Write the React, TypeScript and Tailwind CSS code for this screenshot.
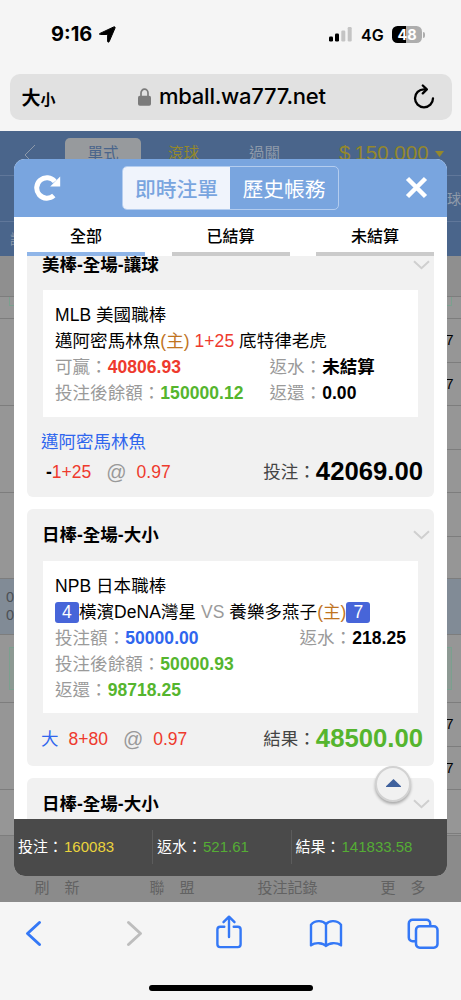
import type { ReactNode } from "react";

const SUMMARY = [
  { label: "投注", value: "160083", color: "text-[#ead43c]", width: "w-[138px] pl-1" },
  { label: "返水", value: "521.61", color: "text-[#55ad35]", width: "w-[139px] pl-1" },
  { label: "結果", value: "141833.58", color: "text-[#55ad35]", width: "w-[156px] pl-[3.500px]" },
];

const LEFT_ROWS = [
  "h-[41px] bg-[#8f8f8f]",
  "h-[22px]",
  "h-[87px]",
  "h-[87px]",
  "h-[86px]",
  "h-[56px] bg-[#818b96]",
  "h-[68px]",
  "h-[87px]",
  "h-[46px]",
];

const RIGHT_ROWS = [
  { cls: "h-[41px] bg-[#8f8f8f]" },
  { cls: "h-[22px]" },
  { cls: "h-[44px]", text: "7" },
  { cls: "h-[43px]", text: "7" },
  { cls: "h-[44px]" },
  { cls: "h-[43px]" },
  { cls: "h-[44px]" },
  { cls: "h-[42px]" },
  { cls: "h-[56px] bg-[#818b96]" },
  { cls: "h-[68px]" },
  { cls: "h-[44px]", text: "7" },
  { cls: "h-[43px]", text: "7" },
  { cls: "h-[44px]" },
  { cls: "h-[2px]" },
];

function StatusBar() {
  return (
    <div className="flex h-[74px] items-start pt-[22px] pl-[51px] font-['Inter']">
      <span className="w-[44px] text-[20px] leading-[25px] font-bold tracking-[0px]">9:16</span>
      <svg className="mt-[4px] ml-[4px]" width="17" height="17" viewBox="0 0 17 17">
        <path
          d="M1 7.400 14.800.900c.9-.4 1.600.3 1.200 1.200L10.200 15.600c-.4.9-1.600.8-1.600-.3V9.200c0-.5-.2-.7-.7-.7H1.400c-1.100 0-1.300-.7-.4-1.100z"
          fill="#000"
          stroke="#000"
          strokeWidth="1"
          strokeLinejoin="round"
        />
      </svg>
      <svg className="mt-[5px] ml-[213px]" width="24" height="15" viewBox="0 0 24 15">
        <rect x="0" y="9.500" width="4" height="5" rx="1.200" />
        <rect x="6" y="6.500" width="4" height="8" rx="1.200" />
        <rect x="12.300" y="3.500" width="4" height="11" rx="1.200" fill="#c4c4c4" />
        <rect x="18.700" y="0" width="4" height="14.500" rx="1.200" fill="#c4c4c4" />
      </svg>
      <span className="ml-[8px] w-[24px] text-[16px] leading-[26px] font-semibold">4G</span>
      <div className="mt-[4px] ml-[7px] flex items-center">
        <div className="flex h-[17px] w-[30px] items-center justify-center rounded-[5.500px] bg-[linear-gradient(90deg,#000_48%,#adadad_48%)] text-[14.500px] leading-[17px] font-bold text-white">
          48
        </div>
        <div className="ml-px h-[6px] w-[2px] rounded-r-full bg-[#adadad]" />
      </div>
    </div>
  );
}

function AddressBar() {
  return (
    <div className="mx-[9.500px] flex h-[45.500px] items-center rounded-[10px] bg-[#e1e1e1]">
      <div className="ml-[12px] flex w-[116px] items-baseline font-['Noto_Sans_CJK_TC'] font-bold">
        <span className="text-[19px]">大</span>
        <span className="text-[15px]">小</span>
      </div>
      <svg width="13" height="18" viewBox="0 0 13 18">
        <path d="M3 9V5a3.500 3.800 0 0 1 7 0v4" fill="none" stroke="#7b7b7b" strokeWidth="1.700" />
        <rect x="0" y="7.800" width="13" height="10" rx="1.800" fill="#7b7b7b" />
      </svg>
      <span className="ml-[8.500px] w-[170px] font-['Inter'] text-[22px] font-medium tracking-[-0.25px]">
        mball.wa777.net
      </span>
      <svg
        className="ml-[84px]"
        width="22"
        height="26"
        viewBox="0 0 22 26"
        fill="none"
        stroke="#000"
        strokeWidth="2.300"
        strokeLinecap="round"
        strokeLinejoin="round"
      >
        <path d="M12.800 5.300h-1.800a9 9 0 1 0 9 9" />
        <path d="m9.800 1.500 4 3.900-4 4" />
      </svg>
    </div>
  );
}

function DimmedPage() {
  return (
    <div className="mt-[11.500px] h-[771px] overflow-hidden bg-[#969696]">
      <div className="h-[125px] bg-[#4a658b] text-[#8e9aaa]">
        <div className="flex h-[45px] items-start border-b border-[#60779a]">
          <svg className="mt-[13px] ml-[24px]" width="12" height="22" viewBox="0 0 12 22" fill="none" stroke="#8e9aaa">
            <path d="M11 1 1 11l10 10" />
          </svg>
          <div className="mt-[7px] ml-[29px] h-[38px] w-[76px] rounded-t-[5px] bg-[#979a9d] text-center text-[15.500px] leading-[32px] text-[#4a658b]">
            單式
          </div>
          <span className="mt-[7px] ml-[27px] text-[15.500px] leading-[32px] text-[#94882c]">滾球</span>
          <span className="mt-[7px] ml-[50px] text-[15.500px] leading-[32px]">過關</span>
          <span className="mt-[6px] ml-[59px] text-[20.500px] leading-[31px] text-[#94882c]">$</span>
          <span className="mt-[6px] ml-[4px] w-[76px] text-[20.500px] leading-[31px] text-[#94882c]">150,000</span>
          <svg className="mt-[20px] ml-[5px]" width="9" height="6" viewBox="0 0 9 6">
            <path d="M0 0h9L4.500 6z" fill="#94882c" />
          </svg>
        </div>
        <div className="flex h-[46px] justify-end border-b border-[#60779a] text-[14px] leading-[46px]">球</div>
        <div className="pl-[10px] text-[14px] leading-[34px]">讓</div>
      </div>
      <div className="flex h-[580px] justify-between">
        <div className="w-[60px] text-[#4b4f54]">
          {LEFT_ROWS.map((cls, i) => (
            <div key={i} className={`border-b border-[#7d7d7d] ${cls}`}>
              {i === 1 && <div className="ml-[9px] h-[9px] border border-t-0 border-[#7ba08f]" />}
              {i === 5 && (
                <div className="pt-[9px] pl-[6px] text-[14.500px] leading-[18px]">
                  0<br />0
                </div>
              )}
              {i === 6 && (
                <div className="pt-[12px] pl-[9px]">
                  <div className="h-[43px] border border-[#7ba08f] bg-[#8d9993]" />
                </div>
              )}
            </div>
          ))}
        </div>
        <div className="w-[60px]">
          {RIGHT_ROWS.map((row, i) => (
            <div key={i} className={`border-b border-[#7d7d7d] ${row.cls}`}>
              {i === 1 && <div className="mr-[9px] h-[9px] border border-t-0 border-[#7ba08f]" />}
              {i === 9 && (
                <div className="pt-[12px] pr-[9px]">
                  <div className="h-[43px] border border-[#7ba08f] bg-[#8d9993]" />
                </div>
              )}
              {row.text && <div className="pr-[7.500px] text-right text-[14.500px] leading-[43px]">{row.text}</div>}
            </div>
          ))}
        </div>
      </div>
      <div className="flex h-[66px] bg-[#8b8b8b] pt-[40px] text-[15px] leading-[24px] text-[#626262]">
        <span className="ml-[34.500px] w-[115px]">刷　新</span>
        <span className="w-[108px]">聯　盟</span>
        <span className="w-[123px]">投注記錄</span>
        <span>更　多</span>
      </div>
    </div>
  );
}

function SafariToolbar() {
  return (
    <div className="relative h-[98px] text-[#3478f6]">
      <div className="flex items-start pt-[12px]">
        <svg className="mt-[6px] ml-[25px]" width="17" height="27" viewBox="0 0 17 27" fill="none" stroke="currentColor" strokeWidth="3" strokeLinecap="round" strokeLinejoin="round">
          <path d="M14.500 2.500 2.500 13.500l12 11" />
        </svg>
        <svg className="mt-[6px] ml-[84px]" width="17" height="27" viewBox="0 0 17 27" fill="none" stroke="#bdbdbd" strokeWidth="3" strokeLinecap="round" strokeLinejoin="round">
          <path d="m2.500 2.500 12 11-12 11" />
        </svg>
        <svg className="ml-[72px]" width="28" height="36" viewBox="0 0 28 36" fill="none" stroke="currentColor" strokeWidth="2.400" strokeLinecap="round" strokeLinejoin="round">
          <path d="M9.300 12.800H5.200a2.800 2.800 0 0 0-2.800 2.800v14.700a2.800 2.800 0 0 0 2.800 2.800h17.600a2.800 2.800 0 0 0 2.800-2.800V15.600a2.800 2.800 0 0 0-2.800-2.800h-4.100" />
          <path d="M14 23V3M8.500 8.200 14 2.700l5.500 5.500" />
        </svg>
        <svg className="mt-[5px] ml-[66px]" width="34" height="30" viewBox="0 0 34 30" fill="none" stroke="currentColor" strokeWidth="2.400" strokeLinejoin="round">
          <path d="M17 27c-3-3.300-10.500-4-15-.6V5.800C6 1 14 1 17 5.200 20 1 28 1 32 5.800v20.600c-4.500-3.400-12-2.700-15 .6zM17 5.200V27" />
        </svg>
        <svg className="mt-[4px] ml-[64px]" width="33" height="32" viewBox="0 0 33 32" fill="none" stroke="currentColor" strokeWidth="2.500">
          <path d="M9 23.200H5.500a3.700 3.700 0 0 1-3.700-3.700V5.500a3.700 3.700 0 0 1 3.700-3.700h14a3.700 3.700 0 0 1 3.700 3.700V8" />
          <rect x="9" y="8.300" width="21.500" height="21.500" rx="3.700" />
        </svg>
      </div>
      <div className="absolute bottom-[9.500px] left-[149px] h-[6px] w-[164px] rounded-full bg-black" />
    </div>
  );
}

function Field({ label, children }: { label: string; children: ReactNode }) {
  return (
    <span className="whitespace-nowrap">
      <span className="text-[#9a9a9a]">{label}：</span>
      <b>{children}</b>
    </span>
  );
}

function Badge({ children }: { children: ReactNode }) {
  return (
    <span className="inline-block h-[21px] w-[24px] rounded-[3px] bg-[#4765d9] text-center leading-[21px] text-white">
      {children}
    </span>
  );
}

function BetCard({ title, children, footer }: { title: string; children?: ReactNode; footer?: ReactNode }) {
  return (
    <div className="rounded-[6px] bg-[#f1f1f1]">
      <div className="flex h-[51.500px] items-center justify-between pt-px pr-[4px] pl-[15px]">
        <h2 className="font-bold">{title}</h2>
        <svg width="17" height="10" viewBox="0 0 17 10" fill="none" stroke="#cfcfcf" strokeWidth="2">
          <path d="m1 1.200 7.500 7 7.500-7" />
        </svg>
      </div>
      {children && (
        <div className="mx-[16px] bg-white px-[12px] pt-[12px] pb-[10.500px] leading-[26px] tracking-[0.05px] whitespace-nowrap">
          {children}
        </div>
      )}
      {footer}
    </div>
  );
}

function Result({ pick, odds, label, amount, color }: { pick: ReactNode; odds: string; label: string; amount: string; color: string }) {
  return (
    <div className="flex items-center leading-[30px] text-[#ee3a2d]">
      {pick}
      <span className="ml-[15px] text-[20px] text-[#999]">@</span>
      <span className="ml-[10px]">{odds}</span>
      <span className="ml-auto text-[#444]">{label}：</span>
      <b className={`-mt-[2px] mr-[11px] text-[25.700px] ${color}`}>{amount}</b>
    </div>
  );
}

function BetModal() {
  return (
    <div className="absolute top-[158.500px] left-[14px] flex h-[717px] w-[433px] flex-col overflow-hidden rounded-[11px] bg-white">
      <div className="flex h-[58.500px] shrink-0 items-center bg-[#79a5df]">
        <svg className="ml-[20px]" width="27" height="27" viewBox="0 0 27 27">
          <path d="M20.800 7.500A10.200 10.200 0 1 0 19.800 21.500" fill="none" stroke="#fff" strokeWidth="5" />
          <path d="M26.200 2.500v10h-10z" fill="#fff" />
        </svg>
        <div className="ml-[61px] flex h-[43.500px] w-[217px] overflow-hidden rounded-[5px] border border-[#b4cdef] text-[20.800px] leading-[46px]">
          <div className="w-[107px] bg-[#f0f4fc] text-center font-medium text-[#79a5df]">即時注單</div>
          <div className="flex-1 text-center text-white">歷史帳務</div>
        </div>
        <svg className="ml-[66px]" width="23" height="23" viewBox="0 0 23 23" stroke="#fff" strokeWidth="4.500">
          <path d="m2.500 2.500 18 18m0-18-18 18" />
        </svg>
      </div>

      <div className="z-10 flex h-[39px] shrink-0 justify-between px-[13px] text-center text-[16px] leading-[39px] font-medium">
        <div className="w-[118px] border-b-4 border-[#8fb5e8]">全部</div>
        <div className="w-[118px] border-b-4 border-[#cbcbcb]">已結算</div>
        <div className="w-[118px] border-b-4 border-[#cbcbcb]">未結算</div>
      </div>

      <div className="min-h-0 flex-1 overflow-hidden px-[13px] text-[17.500px]">
        <div className="-mt-[17.500px] flex flex-col gap-[12px]">
          <BetCard
            title="美棒-全場-讓球"
            footer={
              <div className="pt-[10.500px] pb-[10px] pl-[14px]">
                <div className="leading-[30px] text-[#2f66ee]">邁阿密馬林魚</div>
                <Result
                  pick={<span className="ml-[5px]"><b className="text-black">-</b>1+25</span>}
                  odds="0.97"
                  label="投注"
                  amount="42069.00"
                  color="text-black"
                />
              </div>
            }
          >
            <div>MLB 美國職棒</div>
            <div>
              邁阿密馬林魚<span className="text-[#c0741f]">(主)</span> <span className="text-[#ee3a2d]">1+25</span> 底特律老虎
            </div>
            <div className="flex">
              <div className="w-[214.500px]">
                <Field label="可贏"><span className="text-[#ee3a2d]">40806.93</span></Field>
              </div>
              <Field label="返水">未結算</Field>
            </div>
            <div className="flex">
              <div className="w-[214.500px]">
                <Field label="投注後餘額"><span className="text-[#55b52e]">150000.12</span></Field>
              </div>
              <Field label="返還">0.00</Field>
            </div>
          </BetCard>

          <BetCard
            title="日棒-全場-大小"
            footer={
              <div className="pt-[11px] pb-[11.500px] pl-[14px]">
                <Result
                  pick={<><span className="text-[#2f66ee]">大</span><span className="ml-[10px]">8+80</span></>}
                  odds="0.97"
                  label="結果"
                  amount="48500.00"
                  color="text-[#55b52e]"
                />
              </div>
            }
          >
            <div>NPB 日本職棒</div>
            <div className="h-[26px]">
              <Badge>4</Badge>橫濱DeNA灣星 <span className="text-[#9a9a9a]">VS</span> 養樂多燕子
              <span className="text-[#c0741f]">(主)</span>
              <Badge>7</Badge>
            </div>
            <div className="flex justify-between">
              <Field label="投注額"><span className="text-[#2f66ee]">50000.00</span></Field>
              <Field label="返水">218.25</Field>
            </div>
            <div>
              <Field label="投注後餘額"><span className="text-[#55b52e]">50000.93</span></Field>
            </div>
            <div>
              <Field label="返還"><span className="text-[#55b52e]">98718.25</span></Field>
            </div>
          </BetCard>

          <BetCard title="日棒-全場-大小" />
        </div>
      </div>

      <button
        type="button"
        className="absolute top-[607px] left-[361px] flex h-[36px] w-[36px] items-center justify-center rounded-full border-2 border-[#d2d2d2] bg-[#f1f1f1] shadow-[0_2px_3px_rgba(0,0,0,0.3)]"
      >
        <svg className="mb-[2px]" width="15" height="8" viewBox="0 0 15 8">
          <path d="M7.500 0 15 7.200v.8H0v-.8z" fill="#3f619d" />
        </svg>
      </button>

      <div className="flex h-[56.500px] shrink-0 items-center bg-[#4a4a4a] text-[15px] text-white">
        {SUMMARY.map((item, i) => (
          <div key={item.label} className={`flex h-[34px] items-center whitespace-nowrap ${item.width} ${i > 0 ? "border-l border-[#5c5c5c]" : ""}`}>
            {item.label}：<span className={`ml-px ${item.color}`}>{item.value}</span>
          </div>
        ))}
      </div>
    </div>
  );
}

export default function App() {
  return (
    <div className="relative h-[1000px] w-[461px] overflow-hidden bg-[#f5f5f5] font-['Liberation_Sans','Noto_Sans_CJK_TC',sans-serif] text-black">
      <StatusBar />
      <AddressBar />
      <DimmedPage />
      <SafariToolbar />
      <BetModal />
    </div>
  );
}
